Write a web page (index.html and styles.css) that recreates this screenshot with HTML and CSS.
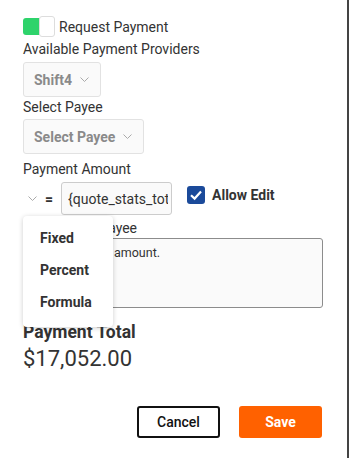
FILE: index.html
```html
<!DOCTYPE html>
<html lang="en">
<head>
    <meta charset="UTF-8">
    <meta name="viewport" content="width=device-width, initial-scale=1.0">
    <title>Request Payment</title>
    <link rel="stylesheet" href="styles.css">
</head>
<body>
    <div class="modal">
        <!-- Request toggle -->
        <div class="toggle-row">
            <span class="toggle"><span class="knob"></span></span>
            <span>Request Payment</span>
        </div>

        <div class="field-label first">Available Payment Providers</div>
        <div class="select provider">
            <span>Shift4</span>
            <svg class="chev" width="9" height="5" viewBox="0 0 9 5"><path d="M0.5 0.5 L4.5 4.5 L8.5 0.5" fill="none" stroke="#aaa" stroke-width="1"/></svg>
        </div>

        <div class="field-label">Select Payee</div>
        <div class="select payee">
            <span>Select Payee</span>
            <svg class="chev" width="9" height="5" viewBox="0 0 9 5"><path d="M0.5 0.5 L4.5 4.5 L8.5 0.5" fill="none" stroke="#aaa" stroke-width="1"/></svg>
        </div>

        <div class="field-label amount-label">Payment Amount</div>
        <div class="amount-row">
            <svg class="chev small" width="9" height="5" viewBox="0 0 9 5"><path d="M0.5 0.5 L4.5 4.5 L8.5 0.5" fill="none" stroke="#aaa" stroke-width="1"/></svg>
            <span class="equals">=</span>
            <input class="formula" type="text" value="{quote_stats_total}">
            <div class="allow-edit">
                <span class="check">
                    <svg width="18" height="18" viewBox="0 0 18 18"><path d="M4 9.2 L7.6 12.6 L14 5.6" fill="none" stroke="#fff" stroke-width="2.2"/></svg>
                </span>
                <span class="check-label">Allow Edit</span>
            </div>

            <div class="menu">
                <div class="menu-item">Fixed</div>
                <div class="menu-item">Percent</div>
                <div class="menu-item">Formula</div>
            </div>
        </div>

        <div class="field-label note-label">Message to Payee</div>
        <textarea class="note">Please pay the amount.</textarea>

        <div class="total-label">Payment Total</div>
        <div class="total">$17,052.00</div>

        <div class="actions">
            <button class="btn cancel" type="button">Cancel</button>
            <button class="btn save" type="button">Save</button>
        </div>
    </div>
</body>
</html>
```

FILE: styles.css
```css
body {
    margin: 0;
    padding: 0;
    background-color: #444444; /* page behind the modal */
    font-family: Roboto, "Liberation Sans", Arial, sans-serif;
    color: #333333;
}

.modal {
    width: 347px;
    height: 458px;
    box-sizing: border-box;
    background-color: #ffffff;
    padding: 16px 25px 0 23px;
}

.toggle-row {
    display: flex;
    align-items: center;
    gap: 4px;
    font-size: 14px;
    height: 21px;
}

.toggle {
    position: relative;
    display: inline-block;
    width: 32px;
    height: 17px;
    background-color: #2ed36b;
    border-radius: 3px;
}

.toggle .knob {
    position: absolute;
    right: 0;
    top: -2px;
    width: 14px;
    height: 19px;
    background-color: #ffffff;
    border: 1px solid #dddddd;
    border-radius: 3px;
}

.field-label {
    font-size: 14px;
    line-height: 18px;
    margin-top: 1px;
}

.field-label.first {
    margin-top: 3px;
}

.select {
    display: flex;
    align-items: center;
    gap: 8px;
    box-sizing: border-box;
    height: 35px;
    margin-top: 4px;
    padding: 0 0 0 10px;
    border: 1px solid #e2e2e2;
    border-radius: 3px;
    background-color: #fafafa;
    color: #8a8a8a;
    font-weight: 700;
    font-size: 14px;
    white-space: nowrap;
}

.select .chev {
    flex-shrink: 0;
}

.select.payee {
    width: 121px;
    margin-top: 3px;
}

.select.provider {
    width: 78px;
}

.amount-label {
    margin-top: 6px;
}

.amount-row {
    position: relative;
    display: flex;
    align-items: center;
    margin-top: 4px;
    height: 33px;
}

.chev.small {
    margin-left: 5px;
}

.equals {
    margin-left: 8px;
    font-weight: 700;
    font-size: 14px;
}

.formula {
    box-sizing: border-box;
    width: 111px;
    height: 33px;
    margin-left: 8px;
    padding: 0 3px 0 6px;
    border: 1px solid #cccccc;
    border-radius: 3px;
    background-color: #fafafa;
    font-family: Roboto, "Liberation Sans", Arial, sans-serif;
    font-size: 14px;
    color: #333333;
}

.allow-edit {
    display: flex;
    align-items: center;
    align-self: flex-start;
    margin-top: 4px;
    margin-left: 15px;
}

.check {
    display: inline-flex;
    width: 18px;
    height: 18px;
    background-color: #1b4a9a;
    border-radius: 3px;
}

.check-label {
    margin-left: 7px;
    font-weight: 700;
    font-size: 14px;
    line-height: 18px;
}

.menu {
    position: absolute;
    left: 0;
    top: 34px;
    width: 90px;
    height: 111px;
    box-sizing: border-box;
    padding-top: 6px;
    background-color: #ffffff;
    border-radius: 4px;
    box-shadow: 0 1px 5px rgba(0, 0, 0, 0.2);
    z-index: 2;
}

.menu-item {
    padding-left: 17px;
    height: 32px;
    line-height: 32px;
    font-weight: 700;
    font-size: 14px;
}

.note-label {
    margin-top: 4px;
}

.note {
    display: block;
    box-sizing: border-box;
    width: 300px;
    height: 70px;
    margin-top: 1px;
    padding: 6px 6px 4px;
    border: 1px solid #8c8c8c;
    border-radius: 3px;
    background-color: #fafafa;
    font-family: Roboto, "Liberation Sans", Arial, sans-serif;
    font-size: 12.5px;
    color: #333333;
    resize: none;
}

.total-label {
    margin-top: 14px;
    font-weight: 700;
    font-size: 17.5px;
    line-height: 20px;
}

.total {
    margin-top: 4px;
    font-size: 22px;
    line-height: 26px;
}

.actions {
    display: flex;
    justify-content: flex-end;
    gap: 19px;
    margin-top: 34px;
}

.btn {
    width: 83px;
    height: 32px;
    border-radius: 3px;
    font-family: Roboto, "Liberation Sans", Arial, sans-serif;
    font-size: 14px;
    cursor: pointer;
}

.btn.cancel {
    background-color: #ffffff;
    border: 2px solid #111111;
    color: #111111;
    font-weight: 500;
}

.btn.save {
    background-color: #ff6100;
    border: none;
    color: #ffffff;
    font-weight: 700;
}
```
